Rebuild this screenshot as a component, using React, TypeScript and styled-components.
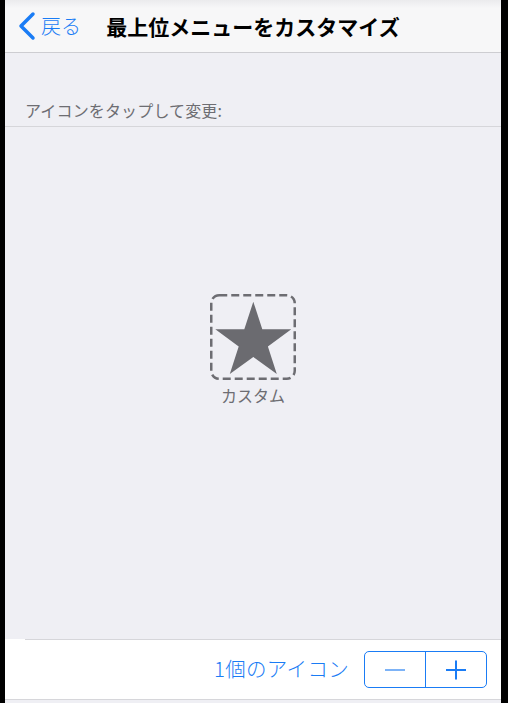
import React from "react";
import styled, { createGlobalStyle } from "styled-components";

const GlobalStyle = createGlobalStyle`
  html, body {
    margin: 0;
    padding: 0;
    background: #000;
  }
  body {
    font-family: "Noto Sans CJK JP", "Noto Sans", sans-serif;
  }
`;

const Frame = styled.div`
  display: flex;
  height: 703px;
  padding: 0 7px 0 5px;
  overflow: hidden;
`;

const Screen = styled.div`
  flex: 1;
  display: flex;
  flex-direction: column;
  background: #efeff4;
`;

const NavBar = styled.div`
  display: grid;
  grid-template-columns: 1fr auto 1fr;
  align-items: center;
  height: 52px;
  background: linear-gradient(#ebebed 0px, #f7f7f8 8px);
  border-bottom: 1px solid #cdcdd1;
`;

const BackButton = styled.div`
  display: flex;
  align-items: center;
  gap: 4px;
  padding-left: 12px;
  color: #1a7cf5;
  font-size: 20px;
  font-weight: 300;
  line-height: 26px;
`;

const Title = styled.div`
  font-size: 21px;
  font-weight: 700;
  color: #000;
  line-height: 26px;
  white-space: nowrap;
`;

const SectionHeader = styled.div`
  padding: 47px 0 6px 20px;
  font-size: 16px;
  line-height: 20px;
  letter-spacing: 0.15px;
  color: #6d6d72;
  border-bottom: 1px solid #d6d6da;
`;

const Canvas = styled.div`
  flex: 1;
  display: flex;
  flex-direction: column;
  align-items: center;
  padding-top: 167px;
`;

const IconLabel = styled.div`
  margin-top: 5px;
  font-size: 16px;
  line-height: 20px;
  color: #6d6d72;
`;

const Toolbar = styled.div`
  background: #fff;
  border-bottom: 1px solid #d6d6da;
  margin-bottom: 3px;
`;

const ToolbarRow = styled.div`
  display: flex;
  align-items: center;
  justify-content: flex-end;
  gap: 15px;
  height: 59px;
  margin-left: 20px;
  padding-right: 14px;
  border-top: 1px solid #d6d6da;
`;

const CountLabel = styled.div`
  font-size: 20.5px;
  font-weight: 300;
  letter-spacing: 0.3px;
  line-height: 26px;
  color: #1a7cf5;
  margin-top: -3px;
`;

const Stepper = styled.div`
  display: flex;
  width: 123px;
  height: 37px;
  box-sizing: border-box;
  border: 1px solid #1a7cf5;
  border-radius: 5px;
  overflow: hidden;
`;

const StepButton = styled.div<{ $divider?: boolean }>`
  flex: 1;
  display: flex;
  align-items: center;
  justify-content: center;
  border-left: ${(p) => (p.$divider ? "1px solid #1a7cf5" : "none")};
`;

const Chevron = () => (
  <svg width="20" height="30" viewBox="0 0 20 30">
    <path
      d="M16 3 L4 15 L16 27"
      fill="none"
      stroke="#1a7cf5"
      strokeWidth="3.5"
      strokeLinecap="round"
      strokeLinejoin="round"
    />
  </svg>
);

const StarTile = () => (
  <svg width="86" height="86" viewBox="0 0 86 86">
    <rect
      x="1.25"
      y="1.25"
      width="83.5"
      height="83.5"
      rx="8"
      fill="none"
      stroke="#6d6d72"
      strokeWidth="2.5"
      strokeDasharray="8 4"
    />
    <polygon
      fill="#6b6b70"
      points="43.3,7.7 52.3,35.3 81.3,35.3 57.9,52.4 66.8,80.1 43.3,63 19.8,80.1 28.7,52.4 5.3,35.3 34.3,35.3"
    />
  </svg>
);

const MinusIcon = () => (
  <svg width="22" height="22" viewBox="0 0 22 22">
    <line x1="1" y1="11" x2="21" y2="11" stroke="#7db3f7" strokeWidth="2" />
  </svg>
);

const PlusIcon = () => (
  <svg width="22" height="22" viewBox="0 0 22 22">
    <line x1="1" y1="11" x2="21" y2="11" stroke="#1a7cf5" strokeWidth="2" />
    <line x1="11" y1="1.5" x2="11" y2="20.5" stroke="#1a7cf5" strokeWidth="2" />
  </svg>
);

export default function App() {
  return (
    <>
      <GlobalStyle />
      <Frame>
        <Screen>
          <NavBar>
            <BackButton>
              <Chevron />
              <span>戻る</span>
            </BackButton>
            <Title>最上位メニューをカスタマイズ</Title>
            <div />
          </NavBar>
          <SectionHeader>アイコンをタップして変更:</SectionHeader>
          <Canvas>
            <StarTile />
            <IconLabel>カスタム</IconLabel>
          </Canvas>
          <Toolbar>
            <ToolbarRow>
              <CountLabel>1個のアイコン</CountLabel>
              <Stepper>
                <StepButton>
                  <MinusIcon />
                </StepButton>
                <StepButton $divider>
                  <PlusIcon />
                </StepButton>
              </Stepper>
            </ToolbarRow>
          </Toolbar>
        </Screen>
      </Frame>
    </>
  );
}
